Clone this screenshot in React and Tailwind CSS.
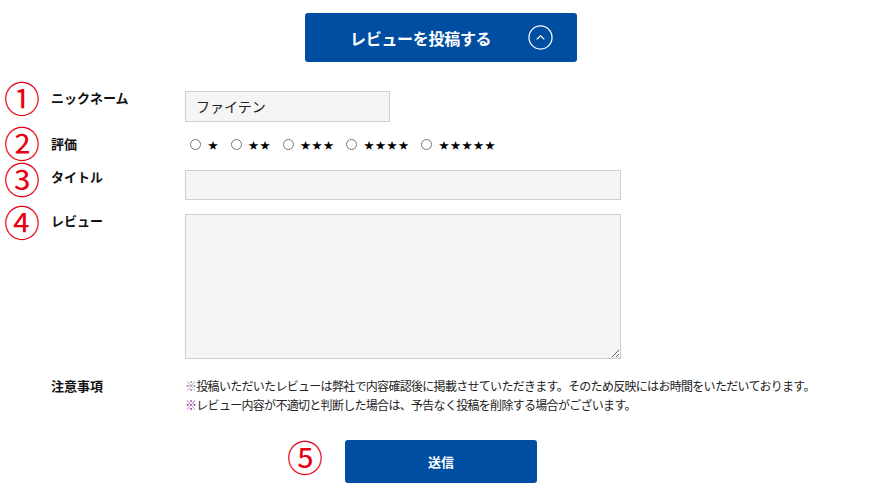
const jp = { fontFamily: '"Noto Sans CJK JP", "Noto Sans", sans-serif' };

const Num = ({ children, className = '' }) => (
  <div className={`w-[51px] shrink-0 pl-[4px] h-[30px] text-[36px] leading-[30px] text-[#e60012] ${className}`}>
    {children}
  </div>
);

const Label = ({ children, className = '' }) => (
  <div className={`w-[134px] shrink-0 text-[13px] leading-[16px] font-bold text-[#111] ${className}`}>
    {children}
  </div>
);

const ratings = ['★', '★★', '★★★', '★★★★', '★★★★★'];

export default function App() {
  return (
    <div className="w-[896px] h-[500px] bg-white overflow-hidden" style={jp}>
      <div className="w-[882px] flex flex-col">
        <div className="flex justify-center pt-[13px]">
          <button className="w-[272px] h-[49px] bg-[#004ea2] rounded-[3px] flex items-center pl-[45px] gap-[37px] text-white">
            <span className="text-[16px] font-bold tracking-[-0.3px]">レビューを投稿する</span>
            <svg width="25" height="25" viewBox="0 0 26 26" fill="none" stroke="white" strokeWidth="1.3">
              <circle cx="13" cy="13" r="12" />
              <path d="M9.5 14.5 L13 11 L16.5 14.5" strokeLinecap="round" strokeLinejoin="round" />
            </svg>
          </button>
        </div>

        <div className="flex items-start mt-[29px]">
          <Num className="-mt-[9px]">①</Num>
          <Label className="-mt-[1px]">ニックネーム</Label>
          <div className="w-[205px] h-[31px] bg-[#f5f5f5] border border-[#cfcfcf] flex items-center px-[10px] text-[14px] text-[#222]">
            ファイテン
          </div>
        </div>

        <div className="flex items-start mt-[8px] h-[28px]">
          <Num className="-mt-[3px]">②</Num>
          <Label className="mt-[6px]">評価</Label>
          <div className="flex items-center h-[28px] gap-[11px] text-[10px] text-black">
            {ratings.map((r, i) => (
              <label key={i} className="flex items-center gap-[7px] first:ml-[5px]">
                <input type="radio" name="rating" className="m-0 w-[11px] h-[11px]" />
                <span className="tracking-[1.5px]">{r}</span>
              </label>
            ))}
          </div>
        </div>

        <div className="flex items-start mt-[12px]">
          <Num className="-mt-[7px]">③</Num>
          <Label className="-mt-[1px]">タイトル</Label>
          <div className="w-[436px] h-[30px] bg-[#f5f5f5] border border-[#cfcfcf]" />
        </div>

        <div className="flex items-start mt-[14px]">
          <Num className="-mt-[8px]">④</Num>
          <Label className="-mt-[1px]">レビュー</Label>
          <textarea className="w-[436px] h-[145px] bg-[#f5f5f5] border border-[#cfcfcf] outline-none block" />
        </div>

        <div className="flex items-start mt-[17px]">
          <div className="w-[51px] shrink-0" />
          <Label className="mt-[2px]">注意事項</Label>
          <div className="text-[12px] leading-[19px] tracking-[-0.7px] text-[#222]">
            <p><span className="text-[#8f78a0]">※</span>投稿いただいたレビューは弊社で内容確認後に掲載させていただきます。そのため反映にはお時間をいただいております。</p>
            <p><span className="text-[#8a2c9c]">※</span>レビュー内容が不適切と判断した場合は、予告なく投稿を削除する場合がございます。</p>
          </div>
        </div>

        <div className="flex justify-center mt-[26px]">
          <div className="relative">
            <span className="absolute left-[-58px] top-[1px] h-[30px] text-[36px] leading-[30px] text-[#e60012]">⑤</span>
            <button className="w-[192px] h-[43px] bg-[#004ea2] rounded-[3px] text-white text-[13px] font-bold">
              送信
            </button>
          </div>
        </div>
      </div>
    </div>
  );
}
